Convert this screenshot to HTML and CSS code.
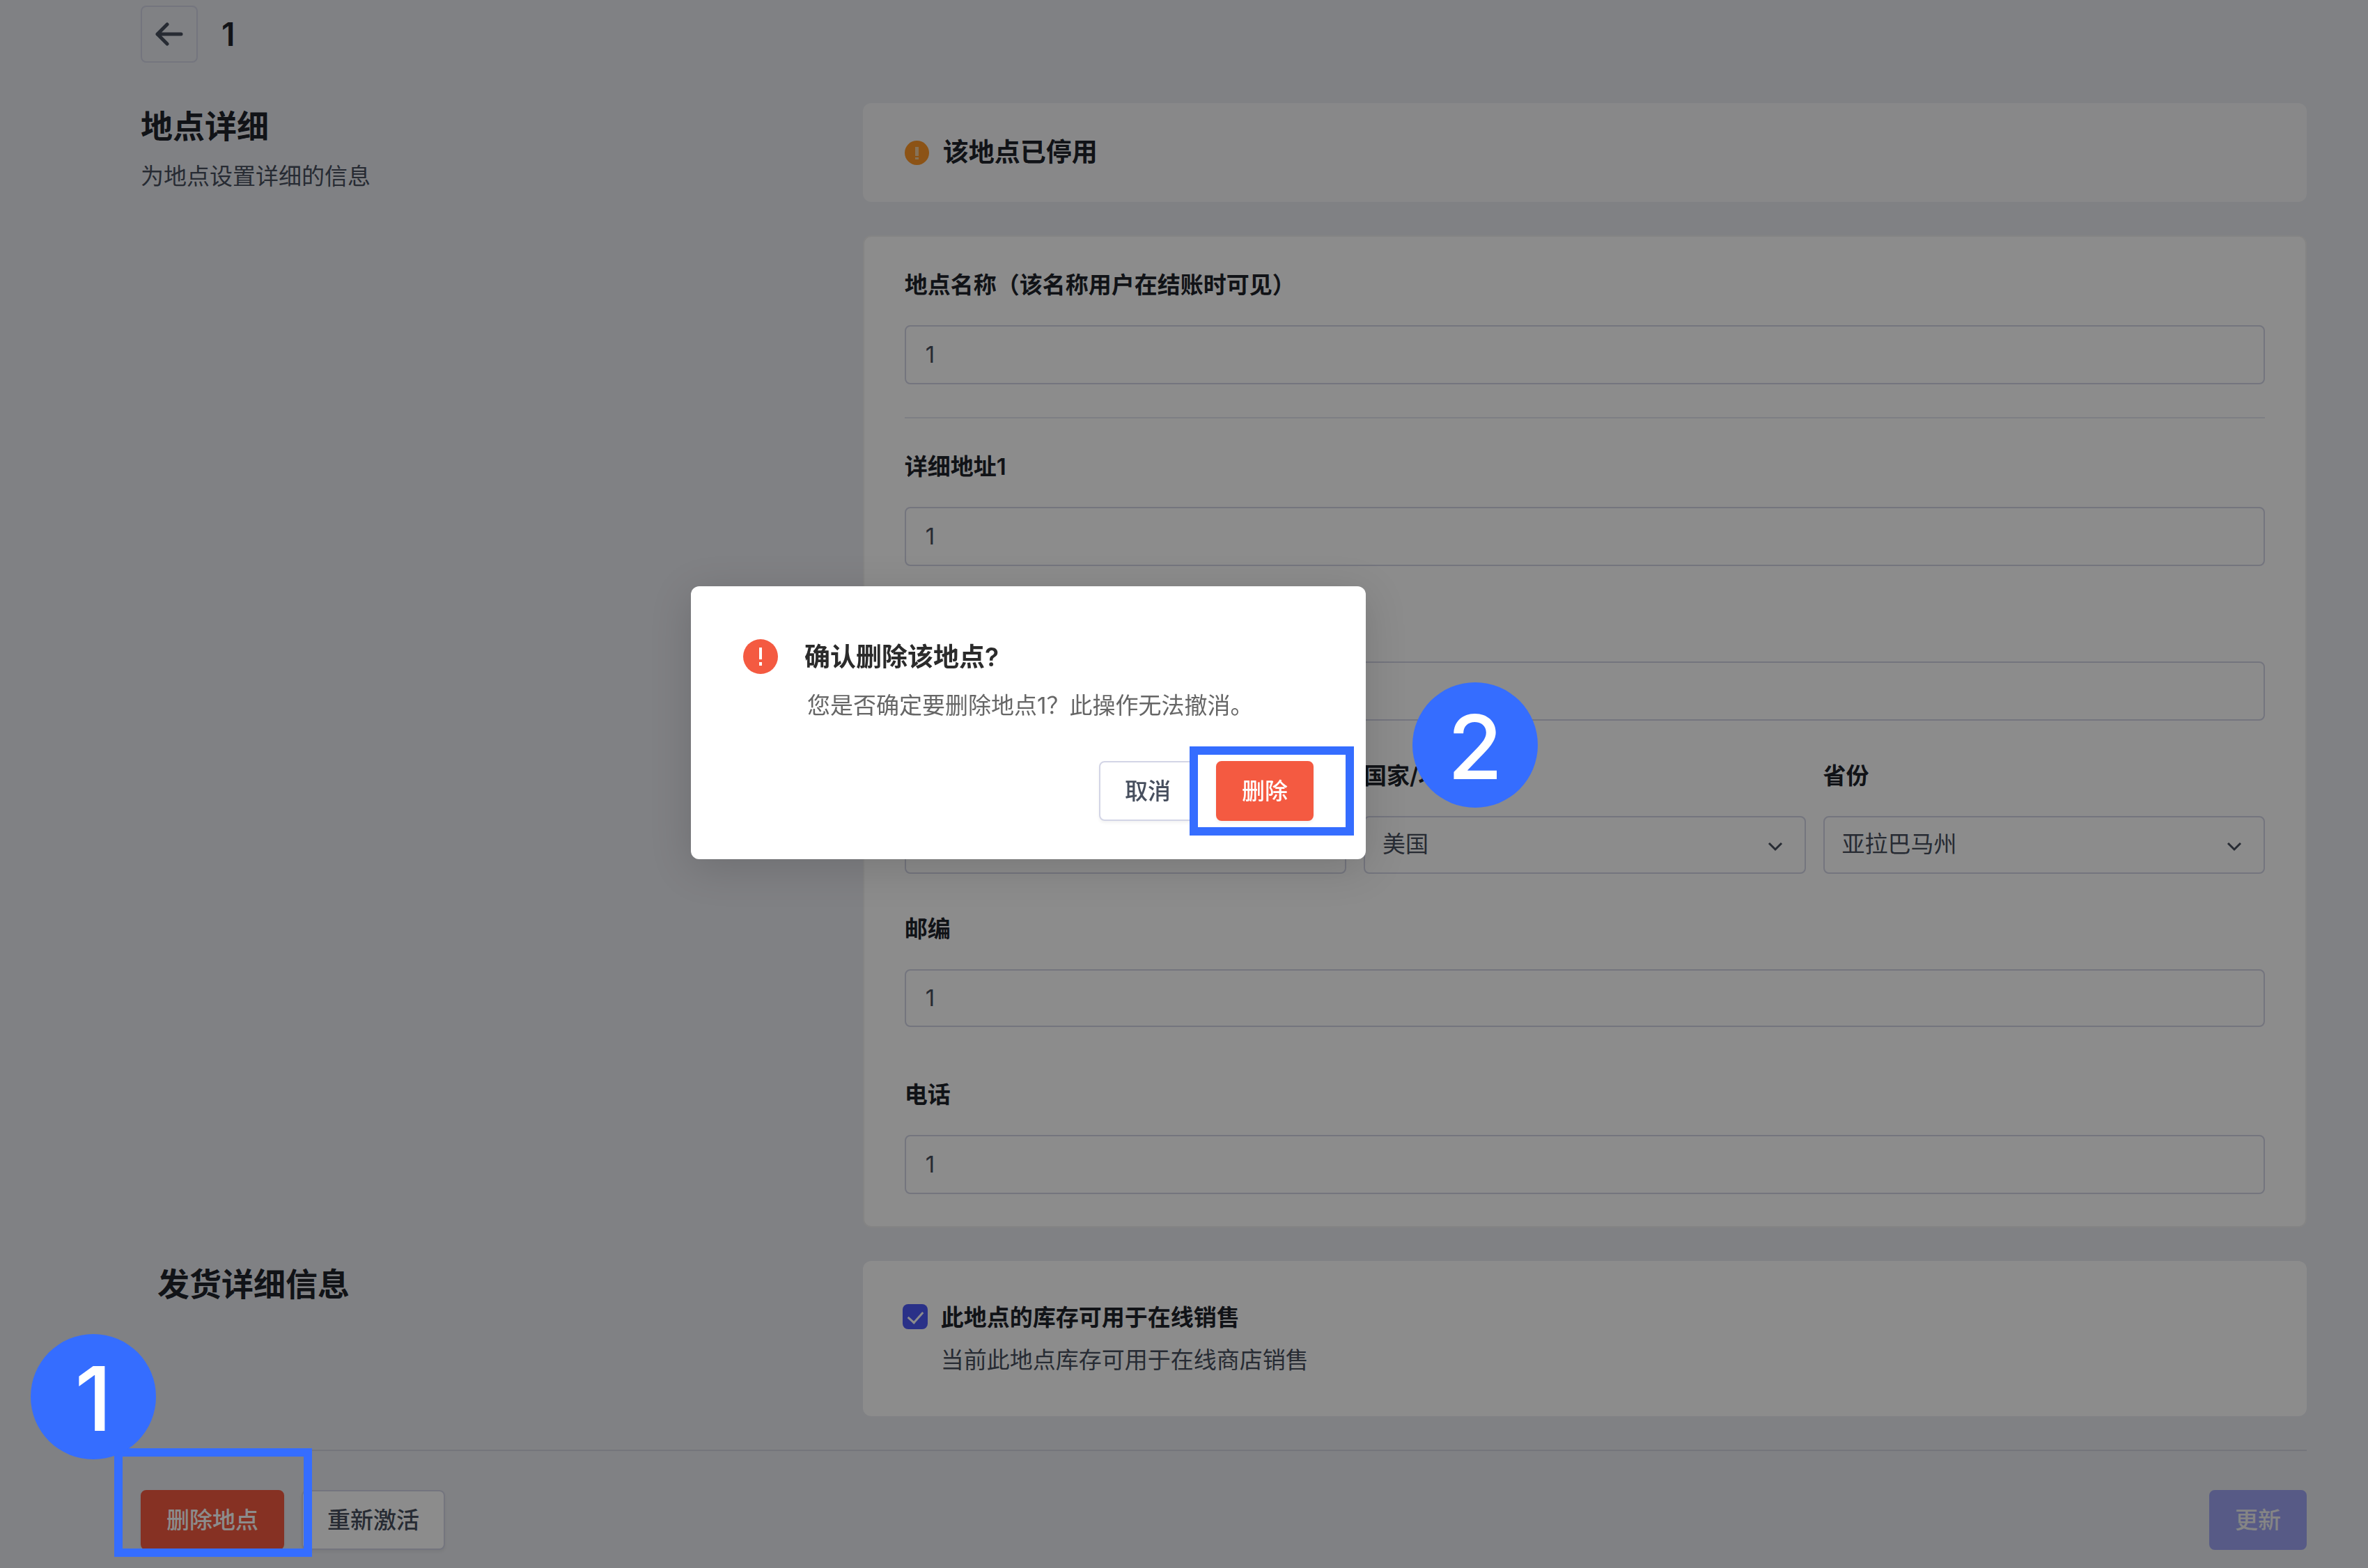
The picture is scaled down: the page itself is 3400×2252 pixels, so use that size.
FILE: index.html
```html
<!DOCTYPE html>
<html lang="zh-CN">
<head>
    <meta charset="UTF-8">
    <meta name="viewport" content="width=device-width, initial-scale=1.0">
    <title>地点详细</title>
    <link rel="stylesheet" href="styles.css">
</head>
<body>
<div class="page">
    <header class="page-header">
        <button type="button" class="back-button" aria-label="返回">
            <svg width="42" height="42" viewBox="0 0 42 42" fill="none" stroke="currentColor" stroke-width="5" stroke-linecap="round" stroke-linejoin="round">
                <path d="M38 21H4M18 7L4 21l14 14"/>
            </svg>
        </button>
        <h1 class="page-title">1</h1>
    </header>

    <main>
        <section class="section">
            <div class="section-info">
                <h2>地点详细</h2>
                <p>为地点设置详细的信息</p>
            </div>

            <div class="section-content">
                <div class="banner">
                    <svg width="35" height="35" viewBox="0 0 35 35">
                        <circle cx="17.5" cy="17.5" r="17.5" fill="#ff9828"/>
                        <path d="M15 9h5v13h-5zM15 24h5v3h-5z" fill="#f5cfa0"/>
                    </svg>
                    <strong>该地点已停用</strong>
                </div>

                <form class="card">
                    <div class="field">
                        <label for="name">地点名称（该名称用户在结账时可见）</label>
                        <input type="text" id="name" value="1">
                    </div>

                    <hr>

                    <div class="field">
                        <label for="address1">详细地址1</label>
                        <input type="text" id="address1" value="1">
                    </div>

                    <div class="field spaced">
                        <label for="address2">详细地址2</label>
                        <input type="text" id="address2">
                    </div>

                    <div class="field-row spaced">
                        <div class="field compact">
                            <label for="city">城市</label>
                            <input type="text" id="city">
                        </div>
                        <div class="field compact">
                            <label for="country">国家/地区</label>
                            <div class="select">
                                <select id="country">
                                    <option>美国</option>
                                </select>
                                <svg width="22" height="14" viewBox="0 0 22 14" fill="none" stroke="currentColor" stroke-width="3">
                                    <path d="M2 2l9 9 9-9"/>
                                </svg>
                            </div>
                        </div>
                        <div class="field compact">
                            <label for="province">省份</label>
                            <div class="select">
                                <select id="province">
                                    <option>亚拉巴马州</option>
                                </select>
                                <svg width="22" height="14" viewBox="0 0 22 14" fill="none" stroke="currentColor" stroke-width="3">
                                    <path d="M2 2l9 9 9-9"/>
                                </svg>
                            </div>
                        </div>
                    </div>

                    <div class="field compact spaced">
                        <label for="zip">邮编</label>
                        <input type="text" id="zip" value="1">
                    </div>

                    <div class="field spaced-large">
                        <label for="phone">电话</label>
                        <input type="text" id="phone" value="1">
                    </div>
                </form>
            </div>
        </section>

        <section class="section">
            <div class="section-info indented">
                <h2>发货详细信息</h2>
            </div>

            <div class="section-content">
                <div class="stock">
                    <input type="checkbox" id="online" checked>
                    <div>
                        <label for="online">此地点的库存可用于在线销售</label>
                        <p>当前此地点库存可用于在线商店销售</p>
                    </div>
                </div>
            </div>
        </section>
    </main>

    <footer class="actions">
        <button type="button" class="button danger">删除地点</button>
        <button type="button" class="button">重新激活</button>
        <button type="button" class="button primary">更新</button>
    </footer>
</div>

<div class="backdrop"></div>

<div class="dialog" role="dialog" aria-modal="true" aria-labelledby="dialog-title">
    <div class="dialog-body">
        <svg class="dialog-icon" width="50" height="50" viewBox="0 0 50 50">
            <circle cx="25" cy="25" r="25" fill="#f45a41"/>
            <path d="M23 12h4v17h-4zM23 33h4v5h-4z" fill="#fff"/>
        </svg>
        <div>
            <h2 id="dialog-title">确认删除该地点?</h2>
            <p>您是否确定要删除地点1？此操作无法撤消。</p>
        </div>
    </div>
    <div class="dialog-actions">
        <button type="button" class="button">取消</button>
        <button type="button" class="button danger">删除</button>
    </div>
</div>

<!-- Tutorial steps -->
<div class="outline outline-1"></div>
<div class="step step-1">1</div>
<div class="outline outline-2"></div>
<div class="step step-2">2</div>
</body>
</html>
```
FILE: styles.css
```css
* {
    box-sizing: border-box;
}
body {
    margin: 0;
    background: #e9ebf0;
    color: #20232b;
    font-family: Inter, "Noto Sans CJK SC", sans-serif;
    font-size: 33px;
    line-height: 50px;
}
h1, h2, p {
    margin: 0;
}
button, input, select {
    font: inherit;
}
.page {
    position: relative;
    min-height: 100vh;
    padding: 8px 88px 26px 202px;
}
.page-header {
    display: flex;
    align-items: center;
    gap: 34px;
    margin-bottom: 58px;
}
.back-button {
    display: flex;
    align-items: center;
    justify-content: center;
    width: 82px;
    height: 82px;
    padding: 0;
    background: none;
    border: 2px solid #d3d5e6;
    border-radius: 8px;
    color: #474f5e;
}
.page-title {
    font-size: 46px;
    font-weight: 600;
    line-height: 64px;
}
.section {
    display: grid;
    grid-template-columns: 1fr 2fr;
    margin-bottom: 48px;
}
.section-info h2 {
    font-size: 46px;
    font-weight: 600;
    line-height: 66px;
}
.section-info p {
    margin-top: 14px;
    color: #474f5e;
}
.indented {
    padding-left: 24px;
}
.section-content {
    display: flex;
    flex-direction: column;
    gap: 48px;
}
.banner {
    display: flex;
    align-items: center;
    gap: 20px;
    padding: 46px 60px;
    background: #f7f8f9;
    border-radius: 12px;
    font-size: 37px;
}
.banner strong {
    font-weight: 600;
}
.card {
    padding: 44px 58px 46px;
    background: #fff;
    border: 2px solid #f0f0f0;
    border-radius: 12px;
}
.card hr {
    margin: 47px 0 44px;
    border: 0;
    border-top: 2px solid #e6e7f0;
}
.field {
    display: flex;
    flex-direction: column;
    gap: 33px;
}
.field label, .stock label {
    font-weight: 600;
}
.field input, .field select {
    width: 100%;
    height: 85px;
    padding: 0 28px 2px;
    background: #fff;
    border: 2px solid #d3d5e6;
    border-radius: 8px;
    color: #474f5e;
}
.field.compact input, .field.compact select {
    height: 83px;
}
.field-row {
    display: grid;
    grid-template-columns: repeat(3, 1fr);
    gap: 25px;
}
.spaced {
    margin-top: 54px;
}
.spaced-large {
    margin-top: 72px;
}
.select {
    display: flex;
    position: relative;
}
.field .select select {
    appearance: none;
    padding: 0 25px 4px;
}
.select svg {
    position: absolute;
    right: 33px;
    top: 37px;
    color: #474f5e;
}
.stock {
    display: flex;
    gap: 19px;
    padding: 56px 57px;
    background: #fff;
    border-radius: 12px;
}
.stock input {
    appearance: none;
    flex: none;
    width: 36px;
    height: 36px;
    margin: 6px 0;
    background: #4e59f8;
    border-radius: 8px;
}
.stock input:checked::before {
    content: "";
    display: block;
    width: 10px;
    height: 18px;
    margin: 6px 0 0 12px;
    border: solid #fff;
    border-width: 0 3px 3px 0;
    transform: rotate(42deg);
}
.stock label {
    display: block;
}
.stock p {
    margin-top: 11px;
    color: #474f5e;
}
.actions {
    display: flex;
    gap: 25px;
    padding-top: 56px;
    border-top: 2px solid #d3d5e0;
}
.button {
    height: 86px;
    padding: 0 35px;
    background: #fff;
    border: 2px solid #d3d5e6;
    border-radius: 8px;
    box-shadow: 0 3px 4px rgba(0, 0, 0, .05);
    color: #474f5e;
    font-weight: 500;
}
.danger {
    background: #f45a41;
    border-color: #f45a41;
    color: #fff;
}
.primary {
    margin-left: auto;
    background: #9ea5f5;
    border-color: #9ea5f5;
    box-shadow: none;
    color: #f2f2f2;
}
.backdrop {
    position: fixed;
    inset: 0;
    background: rgba(0, 0, 0, .45);
}
.dialog {
    position: absolute;
    left: 992px;
    top: 842px;
    width: 969px;
    padding: 76px 75px 55px;
    background: #fff;
    border-radius: 12px;
    box-shadow: 0 12px 60px rgba(0, 0, 0, .15);
}
.dialog-body {
    display: flex;
    gap: 38px;
}
.dialog-icon {
    flex: none;
}
.dialog h2 {
    color: #2b2b2b;
    font-size: 37px;
    font-weight: 600;
    line-height: 52px;
}
.dialog p {
    margin-top: 18px;
    padding-left: 4px;
    color: #666;
}
.dialog-actions {
    display: flex;
    justify-content: flex-end;
    gap: 28px;
    margin-top: 55px;
}
.outline {
    position: absolute;
    border: 12px solid #356dff;
}
.outline-1 {
    left: 164px;
    top: 2080px;
    width: 284px;
    height: 156px;
}
.outline-2 {
    left: 1708px;
    top: 1072px;
    width: 236px;
    height: 128px;
}
.step {
    position: absolute;
    width: 180px;
    height: 180px;
    background: #356dff;
    border-radius: 50%;
    color: #fff;
    font-size: 128px;
    font-weight: 500;
    line-height: 186px;
    text-align: center;
}
.step-1 {
    left: 44px;
    top: 1916px;
}
.step-2 {
    left: 2028px;
    top: 980px;
}
```
